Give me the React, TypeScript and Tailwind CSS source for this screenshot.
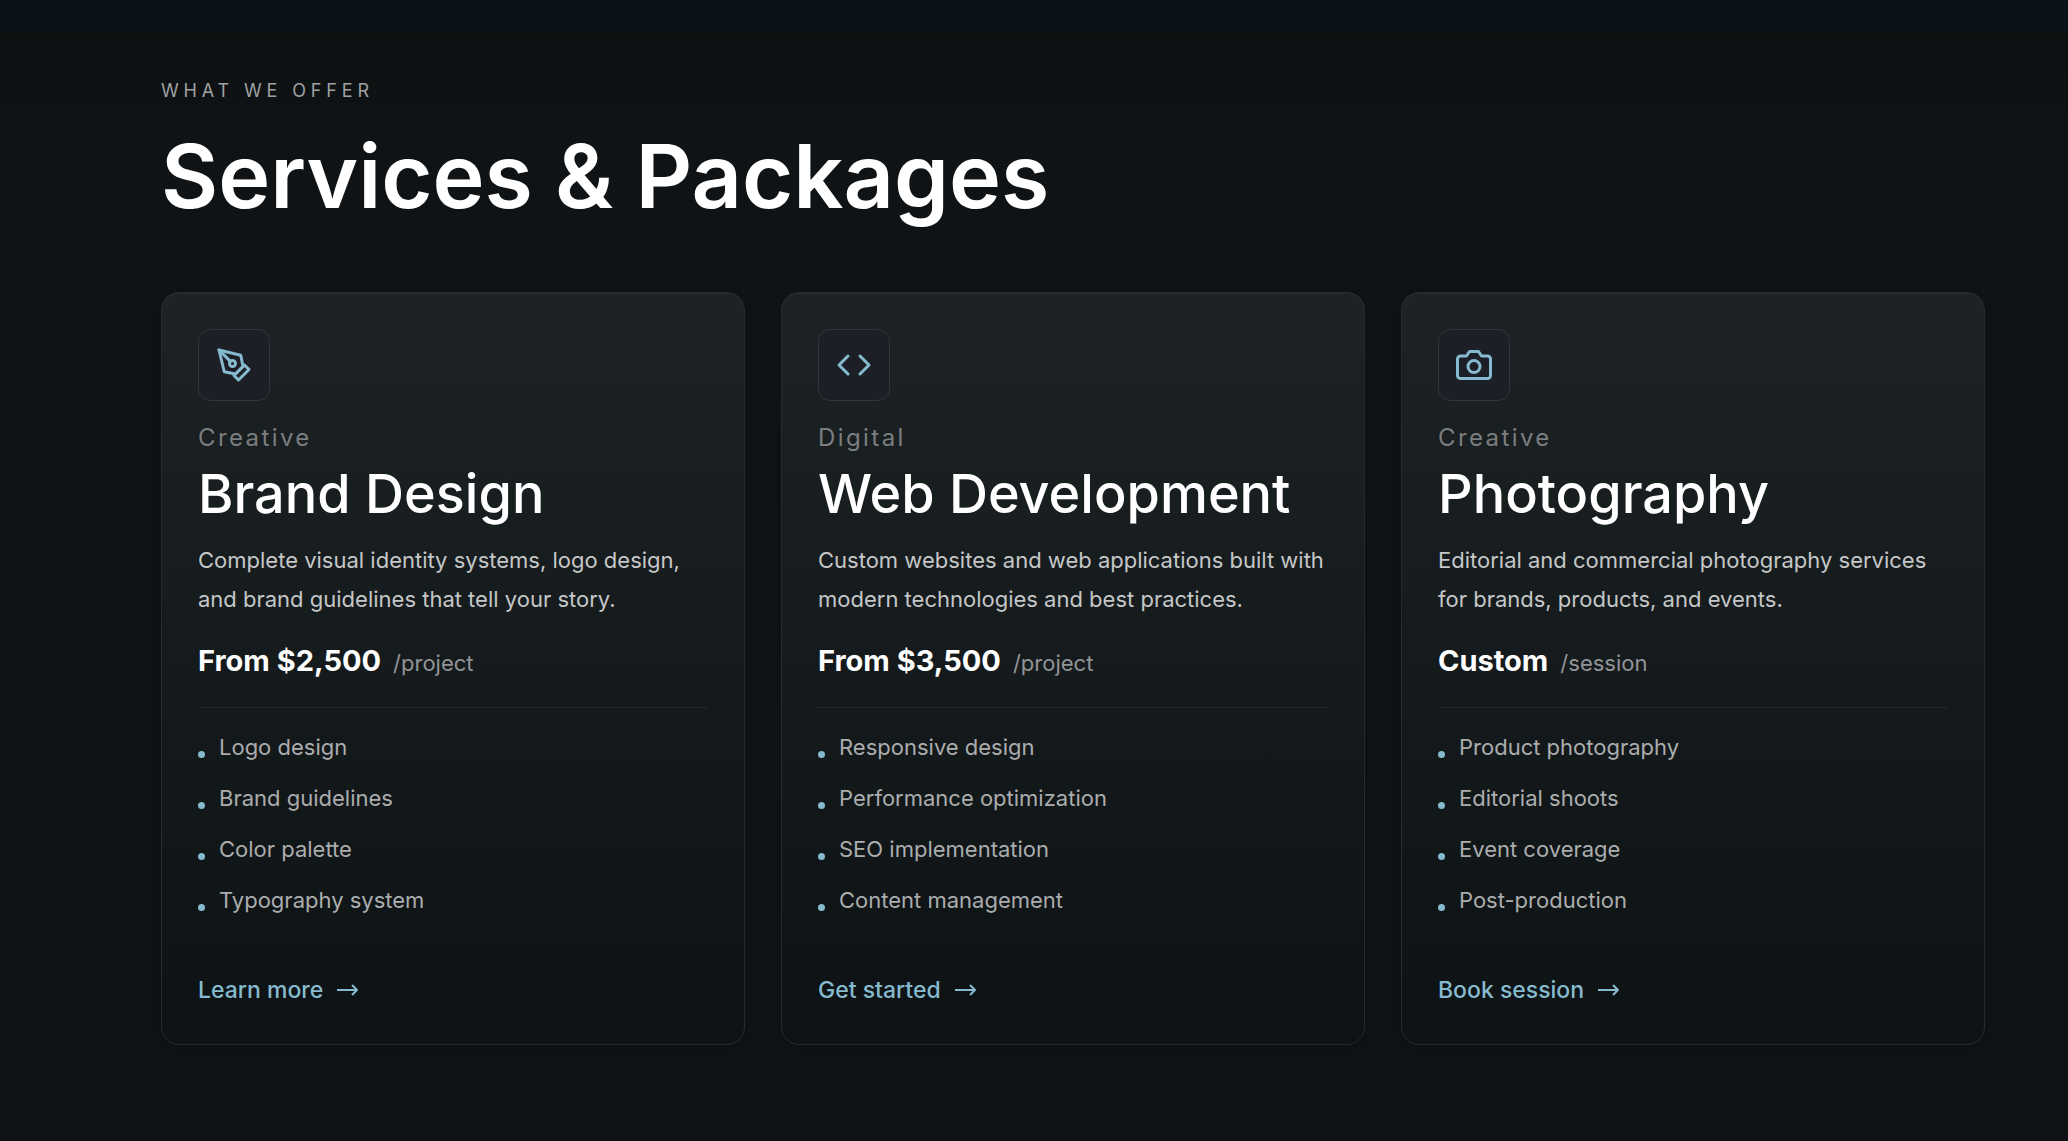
import type { ReactNode } from "react";

type Service = {
  category: string;
  title: string;
  description: string;
  price: string;
  unit: string;
  features: string[];
  action: string;
  icon: ReactNode;
};

const services: Service[] = [
  {
    category: "Creative",
    title: "Brand Design",
    description:
      "Complete visual identity systems, logo design, and brand guidelines that tell your story.",
    price: "From $2,500",
    unit: "/project",
    features: ["Logo design", "Brand guidelines", "Color palette", "Typography system"],
    action: "Learn more",
    icon: (
      <>
        <path d="m12 19 7-7 3 3-7 7-3-3z" />
        <path d="m18 13-1.500-7.500L2 2l3.500 14.500L13 18l5-5z" />
        <path d="m2 2 7.586 7.586" />
        <circle cx="11" cy="11" r="2" />
      </>
    ),
  },
  {
    category: "Digital",
    title: "Web Development",
    description:
      "Custom websites and web applications built with modern technologies and best practices.",
    price: "From $3,500",
    unit: "/project",
    features: [
      "Responsive design",
      "Performance optimization",
      "SEO implementation",
      "Content management",
    ],
    action: "Get started",
    icon: (
      <>
        <path d="m16 18 6-6-6-6" />
        <path d="m8 6-6 6 6 6" />
      </>
    ),
  },
  {
    category: "Creative",
    title: "Photography",
    description:
      "Editorial and commercial photography services for brands, products, and events.",
    price: "Custom",
    unit: "/session",
    features: ["Product photography", "Editorial shoots", "Event coverage", "Post-production"],
    action: "Book session",
    icon: (
      <>
        <path d="M23 19a2 2 0 0 1-2 2H3a2 2 0 0 1-2-2V8a2 2 0 0 1 2-2h4l2-3h6l2 3h4a2 2 0 0 1 2 2z" />
        <circle cx="12" cy="13" r="4" />
      </>
    ),
  },
];

function Arrow() {
  return (
    <svg
      viewBox="0 0 22 12"
      className="h-3 w-[22px]"
      fill="none"
      stroke="currentColor"
      strokeWidth="2"
      strokeLinejoin="round"
      aria-hidden="true"
    >
      <path d="M0 6h20M15 1l5 5-5 5" />
    </svg>
  );
}

function ServiceCard({ service }: { service: Service }) {
  return (
    <article className="flex flex-col rounded-[18px] border border-[#272b2d] bg-linear-to-b from-[#1d2224] to-[#0d1214] p-9 shadow-[inset_0_1px_0_#272b2d,0_2px_8px_rgba(0,0,0,0.2)]">
      <div className="flex size-[72px] items-center justify-center rounded-xl border border-[#323538] bg-[#1d1f27] text-[#86bace]">
        <svg
          viewBox="0 0 24 24"
          className="size-9"
          fill="none"
          stroke="currentColor"
          strokeWidth="2"
          strokeLinecap="round"
          strokeLinejoin="round"
          aria-hidden="true"
        >
          {service.icon}
        </svg>
      </div>
      <p className="mt-5 text-2xl leading-[34px] tracking-[0.1em] text-[#7b7e80]">
        {service.category}
      </p>
      <h2 className="mt-2 text-[54px] leading-[62px] font-medium text-white">{service.title}</h2>
      <p className="mt-4 text-[22px] leading-[39px] text-[#c5c7c8]">{service.description}</p>
      <p className="mt-5 flex items-baseline gap-3">
        <span className="text-[29px] leading-[44px] font-bold text-white">{service.price}</span>
        <span className="text-[22px] text-[#919496]">{service.unit}</span>
      </p>
      <hr className="mt-6 border-[#22272a]" />
      <ul className="mt-[22px] flex flex-col gap-4 text-[22px] leading-[35px] text-[#abadae]">
        {service.features.map((feature) => (
          <li key={feature} className="flex items-center gap-3.5">
            <span className="mt-3.5 size-[7px] rounded-full bg-[#86bace]" />
            {feature}
          </li>
        ))}
      </ul>
      <a
        href="#contact"
        className="mt-[54px] flex items-center gap-3.5 self-start text-[23px] leading-9 font-medium text-[#86bace]"
      >
        {service.action}
        <Arrow />
      </a>
    </article>
  );
}

export default function App() {
  return (
    <div className="min-h-screen bg-[#0f1315] font-['Inter',sans-serif]">
      <div className="h-8 bg-[#0a121a]" />
      <main className="bg-linear-to-b from-[#0c1011] to-[#0f1315] to-10% pt-11 pr-[83px] pb-20 pl-[161px]">
        <header>
          <p className="text-lg leading-[30px] tracking-[0.27em] text-[#9fa1a2] uppercase">
            What we offer
          </p>
          <h1 className="mt-[18px] text-[88px] leading-[104px] font-semibold text-white">
            Services &amp; Packages
          </h1>
        </header>
        <section className="mt-16 grid grid-cols-3 gap-9" aria-label="Service packages">
          {services.map((service) => (
            <ServiceCard key={service.title} service={service} />
          ))}
        </section>
      </main>
    </div>
  );
}
